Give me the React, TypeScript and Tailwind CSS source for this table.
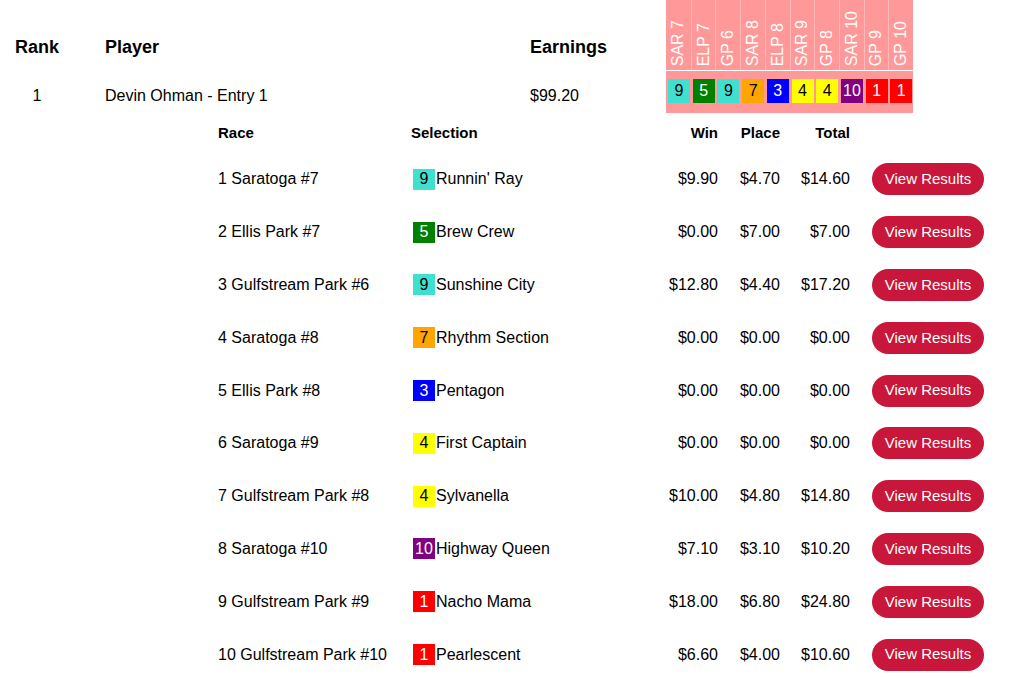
const races = ["SAR 7", "ELP 7", "GP 6", "SAR 8", "ELP 8", "SAR 9", "GP 8", "SAR 10", "GP 9", "GP 10"];

const badgeStyles: Record<string, string> = {
  turquoise: "bg-[#40e0d0] text-black",
  green: "bg-[#008000] text-white",
  orange: "bg-[#ffa500] text-black",
  blue: "bg-[#0000ff] text-white",
  yellow: "bg-[#ffff00] text-black",
  purple: "bg-[#800080] text-white",
  red: "bg-[#ff0000] text-white",
};

interface Pick {
  race: string;
  num: string;
  color: string;
  horse: string;
  win: string;
  place: string;
  total: string;
}

const picks: Pick[] = [
  { race: "1 Saratoga #7", num: "9", color: "turquoise", horse: "Runnin' Ray", win: "$9.90", place: "$4.70", total: "$14.60" },
  { race: "2 Ellis Park #7", num: "5", color: "green", horse: "Brew Crew", win: "$0.00", place: "$7.00", total: "$7.00" },
  { race: "3 Gulfstream Park #6", num: "9", color: "turquoise", horse: "Sunshine City", win: "$12.80", place: "$4.40", total: "$17.20" },
  { race: "4 Saratoga #8", num: "7", color: "orange", horse: "Rhythm Section", win: "$0.00", place: "$0.00", total: "$0.00" },
  { race: "5 Ellis Park #8", num: "3", color: "blue", horse: "Pentagon", win: "$0.00", place: "$0.00", total: "$0.00" },
  { race: "6 Saratoga #9", num: "4", color: "yellow", horse: "First Captain", win: "$0.00", place: "$0.00", total: "$0.00" },
  { race: "7 Gulfstream Park #8", num: "4", color: "yellow", horse: "Sylvanella", win: "$10.00", place: "$4.80", total: "$14.80" },
  { race: "8 Saratoga #10", num: "10", color: "purple", horse: "Highway Queen", win: "$7.10", place: "$3.10", total: "$10.20" },
  { race: "9 Gulfstream Park #9", num: "1", color: "red", horse: "Nacho Mama", win: "$18.00", place: "$6.80", total: "$24.80" },
  { race: "10 Gulfstream Park #10", num: "1", color: "red", horse: "Pearlescent", win: "$6.60", place: "$4.00", total: "$10.60" },
];

function Badge({ num, color, tall }: { num: string; color: string; tall?: boolean }) {
  return (
    <span
      className={`inline-flex w-[22px] ${tall ? "h-[24px]" : "h-[21px]"} items-center justify-center text-[16px] leading-none ${badgeStyles[color]}`}
    >
      {num}
    </span>
  );
}

export default function App() {
  return (
    <div className="min-h-[678px] w-[1023px] bg-white text-black font-['Liberation_Sans',Arial,sans-serif]">
      {/* main header */}
      <div className="flex h-[71px]">
        <div className="ml-[8px] flex w-[58px] items-end justify-center pb-[10px] text-[18px] font-bold">Rank</div>
        <div className="ml-[39px] flex w-[425px] items-end pb-[10px] text-[18px] font-bold">Player</div>
        <div className="flex w-[136px] items-end pb-[10px] text-[18px] font-bold">Earnings</div>
        <div className="grid h-[70px] w-[247px] grid-cols-10 bg-[#ff9999]">
          {races.map((r, i) => (
            <div
              key={r}
              className={`flex items-end justify-center pb-[4px] ${i > 0 ? "border-l border-[#ffb8b8]" : ""}`}
            >
              <span className="rotate-180 text-[16px] leading-none text-white [writing-mode:vertical-rl] whitespace-nowrap">
                {r}
              </span>
            </div>
          ))}
        </div>
      </div>

      {/* entry row */}
      <div className="flex h-[42px] items-center">
        <div className="ml-[8px] w-[58px] pt-[8px] text-center text-[16px]">1</div>
        <div className="ml-[39px] w-[425px] pt-[8px] text-[16px]">Devin Ohman - Entry 1</div>
        <div className="w-[136px] pt-[8px] text-[16px]">$99.20</div>
        <div className="grid h-[42px] w-[247px] grid-cols-10 items-start bg-[#ff9999] pt-[8px]">
          {picks.map((p, i) => (
            <div key={i} className="pl-[2px]">
              <Badge num={p.num} color={p.color} tall />
            </div>
          ))}
        </div>
      </div>

      {/* picks */}
      <div className="ml-[218px] w-[770px]">
        <div className="flex h-[40px] items-center pt-[1px] text-[15px] font-bold">
          <div className="w-[193px]">Race</div>
          <div className="w-[249px]">Selection</div>
          <div className="w-[58px] text-right">Win</div>
          <div className="w-[62px] text-right">Place</div>
          <div className="w-[70px] text-right">Total</div>
        </div>
        {picks.map((p, i) => (
          <div key={i} className="flex h-[52.8px] items-center text-[16px]">
            <div className="w-[193px]">{p.race}</div>
            <div className="flex w-[249px] items-center gap-[1px] pl-[2px]">
              <Badge num={p.num} color={p.color} />
              <span>{p.horse}</span>
            </div>
            <div className="w-[58px] text-right">{p.win}</div>
            <div className="w-[62px] text-right">{p.place}</div>
            <div className="w-[70px] text-right">{p.total}</div>
            <button className="ml-[22px] h-[32px] w-[112px] rounded-full bg-[#c8173a] text-[15px] text-white">
              View Results
            </button>
          </div>
        ))}
      </div>
    </div>
  );
}
